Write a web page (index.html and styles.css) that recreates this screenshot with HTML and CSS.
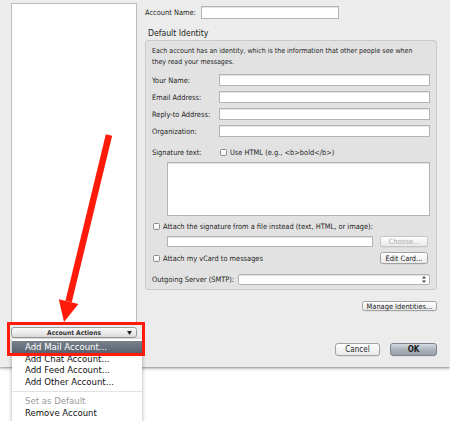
FILE: index.html
```html
<!DOCTYPE html>
<html>
<head>
<meta charset="utf-8">
<link rel="stylesheet" href="styles.css">
</head>
<body>
<div class="window">
  <div class="sidebar">
    <div class="list"></div>
    <div class="actions-btn"><span class="actions-label">Account Actions</span><svg class="tri" width="5" height="4" viewBox="0 0 5 4"><path d="M0 0H5L2.5 4Z" fill="#222"/></svg></div>
  </div>
  <div class="main">
    <div class="name-row"><span class="name-label">Account Name:</span><div class="field name-field"></div></div>
    <div class="section-title">Default Identity</div>
    <div class="group">
      <p class="intro">Each account has an identity, which is the information that other people see when they read your messages.</p>
      <div class="form">
        <span>Your Name:</span><div class="field input"></div>
        <span>Email Address:</span><div class="field input"></div>
        <span>Reply-to Address:</span><div class="field input"></div>
        <span>Organization:</span><div class="field input"></div>
      </div>
      <div class="sig-row"><span class="sig-label">Signature text:</span><span class="check"></span><span>Use HTML (e.g., &lt;b&gt;bold&lt;/b&gt;)</span></div>
      <div class="field textarea"></div>
      <div class="check-row attach-row"><span class="check"></span><span>Attach the signature from a file instead (text, HTML, or image):</span></div>
      <div class="file-row"><div class="field file-field"></div><div class="btn small disabled">Choose...</div></div>
      <div class="vcard-row"><div class="check-row"><span class="check"></span><span>Attach my vCard to messages</span></div><div class="btn small edit">Edit Card...</div></div>
      <div class="smtp-row"><span class="smtp-label">Outgoing Server (SMTP):</span><div class="field popup"><svg width="4" height="7" viewBox="0 0 4 7"><path d="M0 2.6H4L2 0Z M0 4.4H4L2 7Z" fill="#444"/></svg></div></div>
    </div>
    <div class="manage-row"><div class="btn manage">Manage Identities...</div></div>
    <div class="footer"><div class="btn big cancel">Cancel</div><div class="btn big ok">OK</div></div>
  </div>
</div>
<div class="menu">
  <div class="item active">Add Mail Account...</div>
  <div class="item">Add Chat Account...</div>
  <div class="item">Add Feed Account...</div>
  <div class="item">Add Other Account...</div>
  <div class="sep"></div>
  <div class="item dim">Set as Default</div>
  <div class="item">Remove Account</div>
</div>
<div class="callout"></div>
<svg class="arrow" width="450" height="421" viewBox="0 0 450 421">
  <path d="M109 135 L68.6 301.5" stroke="#ff1a0a" stroke-width="6.5" fill="none"/>
  <path d="M78.4 304 L64 322 L58.8 299.2 Z" fill="#ff1a0a"/>
</svg>
</body>
</html>
```
FILE: styles.css
```css
html, body {
  margin: 0;
  padding: 0;
}
body {
  width: 450px;
  height: 421px;
  overflow: hidden;
  position: relative;
  background: #fff;
  font-family: "DejaVu Sans Condensed", "DejaVu Sans", "Liberation Sans", sans-serif;
  font-size: 7.4px;
  color: #1e1e1e;
}
.window {
  height: 367px;
  box-sizing: border-box;
  background: #ececec;
  box-shadow: 0 1px 2px rgba(0,0,0,0.35), 0 2px 4px rgba(0,0,0,0.15);
  display: flex;
  gap: 8px;
  padding: 3px 13px 0 11px;
}
.sidebar {
  width: 126px;
  display: flex;
  flex-direction: column;
}
.list {
  height: 320px;
  box-sizing: border-box;
  background: #fff;
  border: 1px solid #bcbcbc;
}
.actions-btn {
  margin-top: 4px;
  height: 11px;
  box-sizing: border-box;
  border: 1px solid #9c9c9c;
  border-radius: 3px;
  background: linear-gradient(#fbfbfb, #dcdcdc);
  display: flex;
  align-items: center;
  justify-content: center;
  position: relative;
  font-size: 6.6px;
  font-weight: bold;
  color: #333;
}
.actions-btn .tri {
  position: absolute;
  right: 4px;
  top: 3px;
}
.main {
  flex: 1;
  display: flex;
  flex-direction: column;
  padding-top: 3px;
}
.name-row {
  display: flex;
  align-items: center;
  height: 13px;
}
.name-label {
  width: 56px;
}
.field {
  background: #fff;
  border: 1px solid #b4b4b4;
  box-sizing: border-box;
  box-shadow: inset 0 1px 0 #e4e4e4;
}
.name-field {
  width: 138px;
  height: 13px;
}
.section-title {
  margin-top: 8px;
  padding-left: 3px;
  height: 12px;
  line-height: 12px;
  font-size: 8.6px;
  color: #222;
}
.group {
  margin-top: 1px;
  height: 250px;
  box-sizing: border-box;
  background: #e2e2e2;
  border: 1px solid #cacaca;
  border-radius: 3px;
  padding: 5px 6px 0 6px;
}
.intro {
  margin: 0;
  font-size: 7px;
  line-height: 11px;
  padding-right: 12px;
}
.form {
  margin-top: 6px;
  display: grid;
  grid-template-columns: 67px 211px;
  row-gap: 5px;
  align-items: center;
}
.input {
  height: 12px;
}
.sig-row {
  margin-top: 10px;
  height: 10px;
  display: flex;
  align-items: center;
}
.sig-label {
  width: 68px;
}
.check {
  width: 7px;
  height: 7px;
  box-sizing: border-box;
  border: 1px solid #8e8e8e;
  border-radius: 1.5px;
  background: linear-gradient(#ffffff, #eeeeee);
  margin-right: 3px;
  flex: none;
}
.textarea {
  margin: 5px 0 0 15px;
  width: 263px;
  height: 54px;
}
.check-row {
  display: flex;
  align-items: center;
  height: 10px;
  padding-left: 1px;
}
.attach-row {
  margin-top: 5px;
}
.file-row {
  margin-top: 5px;
  display: flex;
  align-items: center;
  gap: 7px;
  padding-left: 15px;
}
.file-field {
  width: 206px;
  height: 11px;
}
.btn {
  box-sizing: border-box;
  border: 1px solid #a2a2a2;
  border-radius: 2.5px;
  background: linear-gradient(#ffffff, #e9e9e9);
  display: flex;
  align-items: center;
  justify-content: center;
  color: #222;
  box-shadow: 0 0.5px 0 rgba(0,0,0,0.08);
  white-space: nowrap;
}
.small {
  width: 48px;
  height: 11px;
}
.disabled {
  color: #a8a8a8;
  border-color: #c4c4c4;
}
.vcard-row {
  margin-top: 5px;
  display: flex;
  align-items: center;
  justify-content: space-between;
  padding-right: 2px;
}
.edit {
  height: 12px;
}
.smtp-row {
  margin-top: 10px;
  display: flex;
  align-items: center;
}
.smtp-label {
  width: 86px;
}
.popup {
  width: 192px;
  height: 11px;
  border-radius: 2px;
  display: flex;
  align-items: center;
  justify-content: flex-end;
  padding-right: 3px;
}
.manage-row {
  margin-top: 11px;
  display: flex;
  justify-content: flex-end;
}
.manage {
  width: 75px;
  height: 10px;
}
.footer {
  margin-top: 32px;
  display: flex;
  justify-content: flex-end;
  gap: 10px;
}
.big {
  height: 13px;
  font-size: 8px;
  border-radius: 3px;
}
.cancel {
  width: 45px;
}
.ok {
  width: 47px;
  font-weight: bold;
  background: linear-gradient(#d6dae0, #a9b0b9 55%, #9aa1ab);
  border-color: #7c838d;
  color: #1c1c1c;
}
.menu {
  position: absolute;
  left: 12px;
  top: 339px;
  width: 130px;
  height: 90px;
  background: #fff;
  box-shadow: 0 1px 4px rgba(0,0,0,0.35);
  padding-top: 2px;
  box-sizing: border-box;
  font-size: 9.5px;
  color: #111;
}
.item {
  height: 11.5px;
  line-height: 11.5px;
  padding-left: 13px;
  white-space: nowrap;
}
.item.active {
  background: linear-gradient(#79818d, #5a626e);
  color: #fff;
}
.item.dim {
  color: #9b9b9b;
}
.sep {
  height: 1px;
  background: #e2e2e2;
  margin: 3.5px 0;
}
.callout {
  position: absolute;
  left: 7px;
  top: 322px;
  width: 138px;
  height: 34px;
  box-sizing: border-box;
  border: 3.5px solid #ff1a0a;
}
.arrow {
  position: absolute;
  left: 0;
  top: 0;
  pointer-events: none;
}
```
